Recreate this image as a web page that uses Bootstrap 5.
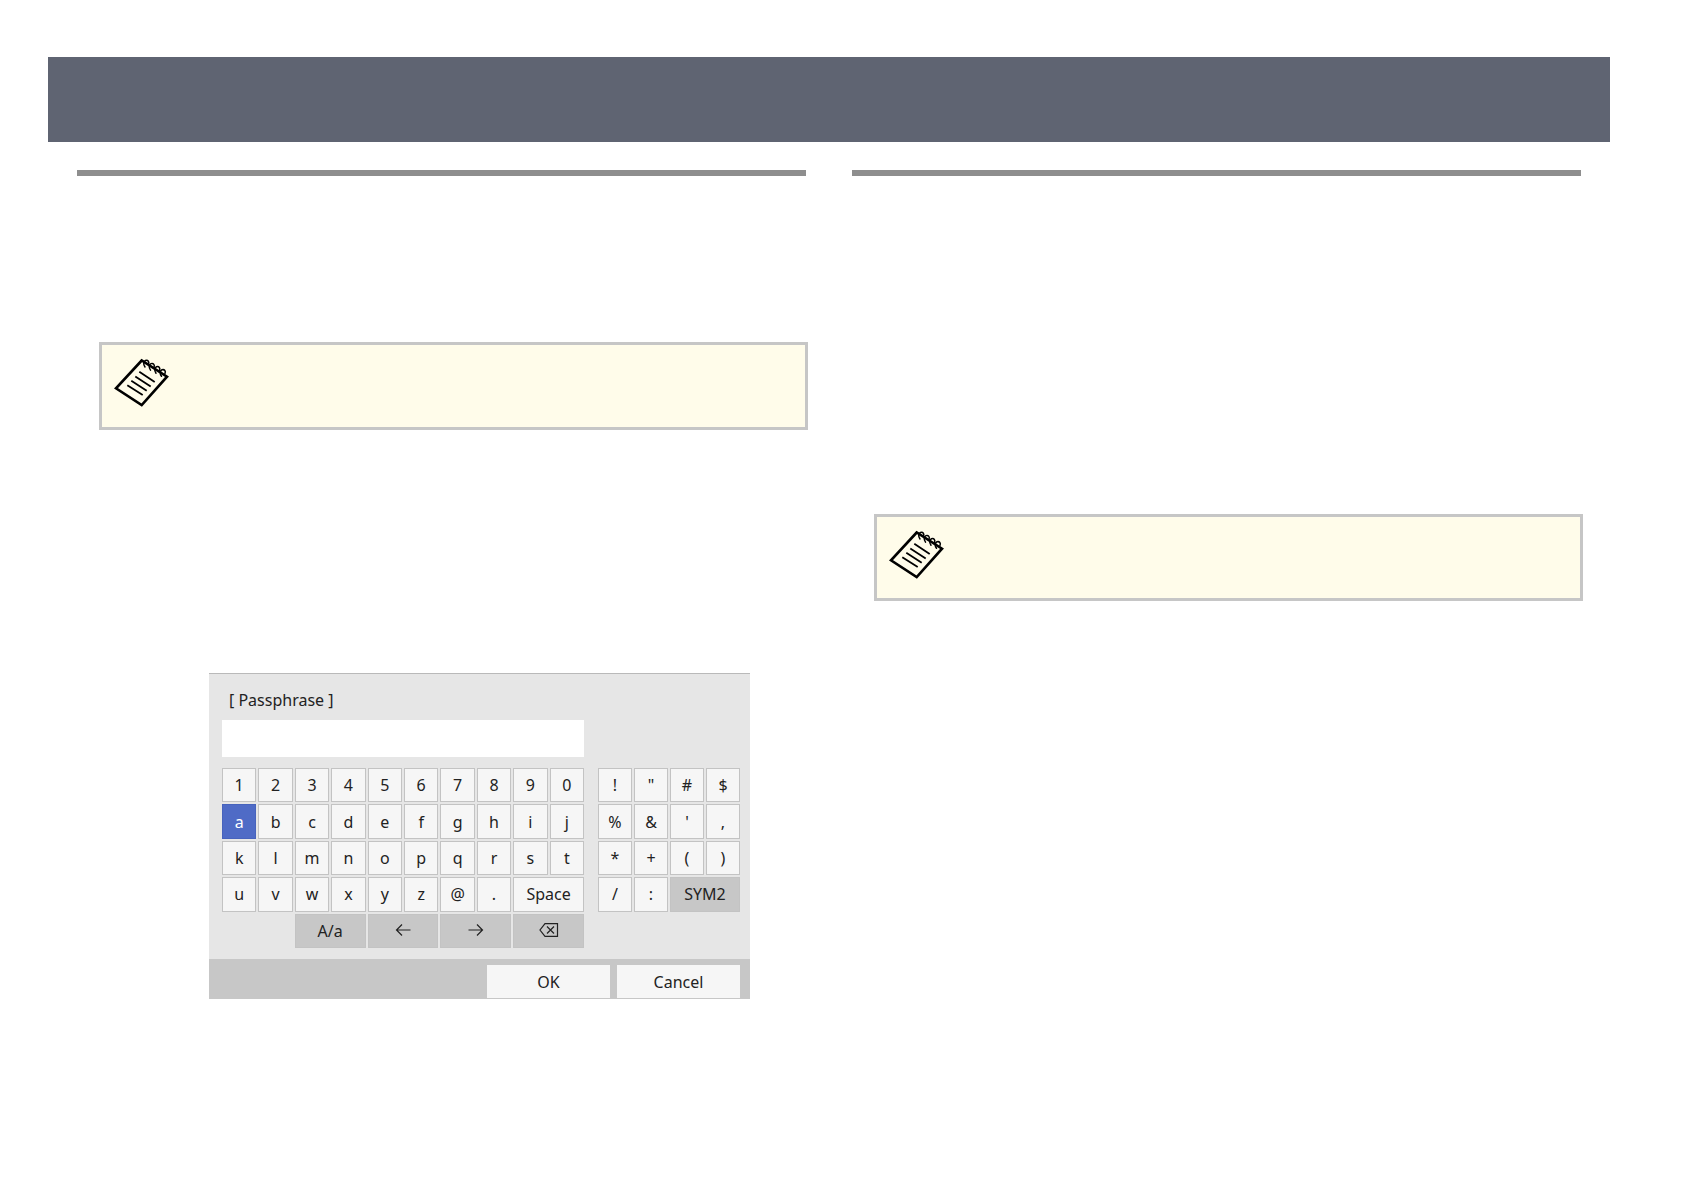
<!DOCTYPE html>
<html lang="en">
<head>
<meta charset="utf-8">
<meta name="viewport" content="width=device-width, initial-scale=1">
<title>Passphrase</title>
<link href="https://cdn.jsdelivr.net/npm/bootstrap@5.3.0/dist/css/bootstrap.min.css" rel="stylesheet">
<style>
body { font-family: "Noto Sans", sans-serif; background: #fff; color: #222; }
.sheet { padding: 57px 74px 0 48px; }
.banner { height: 85px; background: #5f6472; }
.columns { padding: 28px 29px 0 29px; gap: 46px; }
.column-rule { height: 6px; background: #8e8e8e; }
.note-box { height: 88px; margin: 0 -2px 0 22px; padding: 13px 12px; border: 3px solid #c6c6c6; background: #fffcea; }
.note-first { margin-top: 166px; }
.note-second { margin-top: 338px; height: 87px; }
.screen { max-width: 541px; margin: 243px 0 0 132px; background: #e6e6e6; border-top: 1px solid #b9b9b9; }
.screen-body { padding: 14px 10px 11px 13px; }
.field-label { font-size: 16px; line-height: 24px; padding-left: 7px; margin-bottom: 8px; }
.field-box { width: 362px; height: 37px; border: 0; border-radius: 0; background: #fff; margin-bottom: 11px; }
.key-area { gap: 14px; }
.key-grid { display: grid; gap: 2px; height: 180px; grid-template-rows: repeat(5, 1fr); }
.key-main { width: 362px; grid-template-columns: repeat(10, 1fr); }
.key-symbols { flex: 1; grid-template-columns: repeat(4, 1fr); }
.key, .action { --bs-btn-color: #222; --bs-btn-bg: #f6f6f6; --bs-btn-border-color: #c3c3c3; --bs-btn-border-radius: 0; --bs-btn-padding-x: 0; --bs-btn-padding-y: 0; --bs-btn-font-size: 16px; --bs-btn-line-height: 24px; min-width: 0; }
.key-dark { --bs-btn-bg: #c7c7c7; }
.key-active { --bs-btn-color: #fff; --bs-btn-bg: #4f6bc6; --bs-btn-border-color: #4763bd; }
.key-wide { grid-column: span 2; }
.key-shift { grid-column: 3 / span 2; }
.key svg { display: block; margin: -2px auto 0; }
.screen-foot { background: #c7c7c7; padding: 6px 10px 1px; gap: 7px; }
.action { width: 123px; height: 33px; --bs-btn-border-width: 0; }
</style>
<script src="https://cdn.jsdelivr.net/npm/bootstrap@5.3.0/dist/js/bootstrap.bundle.min.js"></script>
</head>
<body>
<svg class="d-none" aria-hidden="true">
  <symbol id="notepad" viewBox="0 0 56 50">
    <path d="M27.7 2.5 2 30.3 27.7 47 53 18.7Z" fill="#fffcea" stroke="#000" stroke-width="2.6"/>
    <path d="M25.3 13.7 40.7 24M21.3 18.5 36.7 28.5M17.3 22.7 32.7 32.7M13.3 27.2 28.7 37" fill="none" stroke="#000" stroke-width="1.8"/>
    <g fill="none" stroke="#000" stroke-width="1.5" stroke-linecap="round">
      <path id="ring" d="M31 9C29.200 6.500 29.300 3.500 31.500 2.500C34 1.700 35.600 4 34.400 6.400"/>
      <use href="#ring" x="5.500" y="3.100"/><use href="#ring" x="11" y="6.200"/><use href="#ring" x="16.500" y="9.300"/>
    </g>
  </symbol>
</svg>
<main class="sheet">
  <header class="banner"></header>
  <div class="columns d-flex align-items-start">
    <section class="flex-fill w-50">
      <div class="column-rule"></div>
      <aside class="note-box note-first"><svg width="56" height="50" role="img" aria-label="Note"><use href="#notepad"/></svg></aside>
      <form class="screen">
        <div class="screen-body">
          <label class="field-label d-block" for="passphrase">[ Passphrase ]</label>
          <input class="field-box d-block" id="passphrase" type="text">
          <div class="key-area d-flex">
            <div class="key-grid key-main">
              <button type="button" class="btn key">1</button><button type="button" class="btn key">2</button><button type="button" class="btn key">3</button><button type="button" class="btn key">4</button><button type="button" class="btn key">5</button><button type="button" class="btn key">6</button><button type="button" class="btn key">7</button><button type="button" class="btn key">8</button><button type="button" class="btn key">9</button><button type="button" class="btn key">0</button>
              <button type="button" class="btn key key-active">a</button><button type="button" class="btn key">b</button><button type="button" class="btn key">c</button><button type="button" class="btn key">d</button><button type="button" class="btn key">e</button><button type="button" class="btn key">f</button><button type="button" class="btn key">g</button><button type="button" class="btn key">h</button><button type="button" class="btn key">i</button><button type="button" class="btn key">j</button>
              <button type="button" class="btn key">k</button><button type="button" class="btn key">l</button><button type="button" class="btn key">m</button><button type="button" class="btn key">n</button><button type="button" class="btn key">o</button><button type="button" class="btn key">p</button><button type="button" class="btn key">q</button><button type="button" class="btn key">r</button><button type="button" class="btn key">s</button><button type="button" class="btn key">t</button>
              <button type="button" class="btn key">u</button><button type="button" class="btn key">v</button><button type="button" class="btn key">w</button><button type="button" class="btn key">x</button><button type="button" class="btn key">y</button><button type="button" class="btn key">z</button><button type="button" class="btn key">@</button><button type="button" class="btn key">.</button><button type="button" class="btn key key-wide">Space</button>
              <button type="button" class="btn key key-dark key-shift">A/a</button>
              <button type="button" class="btn key key-dark key-wide" aria-label="Left"><svg width="16" height="14" fill="none" stroke="#222" stroke-width="1.2"><path d="M15.500 7H1.500M7 1.500 1.500 7 7 12.500"/></svg></button>
              <button type="button" class="btn key key-dark key-wide" aria-label="Right"><svg width="16" height="14" fill="none" stroke="#222" stroke-width="1.2"><path d="M.5 7H14.500M9 1.500 14.500 7 9 12.500"/></svg></button>
              <button type="button" class="btn key key-dark key-wide" aria-label="Delete"><svg width="20" height="14" fill="none" stroke="#222" stroke-width="1.2"><path d="M6 .7H18.500V13.300H6L1 7ZM8 3.500 15 10.500M15 3.500 8 10.500"/></svg></button>
            </div>
            <div class="key-grid key-symbols">
              <button type="button" class="btn key">!</button><button type="button" class="btn key">"</button><button type="button" class="btn key">#</button><button type="button" class="btn key">$</button>
              <button type="button" class="btn key">%</button><button type="button" class="btn key">&amp;</button><button type="button" class="btn key">'</button><button type="button" class="btn key">,</button>
              <button type="button" class="btn key">*</button><button type="button" class="btn key">+</button><button type="button" class="btn key">(</button><button type="button" class="btn key">)</button>
              <button type="button" class="btn key">/</button><button type="button" class="btn key">:</button><button type="button" class="btn key key-dark key-wide">SYM2</button>
            </div>
          </div>
        </div>
        <div class="screen-foot d-flex justify-content-end">
          <button type="submit" class="btn action">OK</button>
          <button type="reset" class="btn action">Cancel</button>
        </div>
      </form>
    </section>
    <section class="flex-fill w-50">
      <div class="column-rule"></div>
      <aside class="note-box note-second"><svg width="56" height="50" role="img" aria-label="Note"><use href="#notepad"/></svg></aside>
    </section>
  </div>
</main>
</body>
</html>
